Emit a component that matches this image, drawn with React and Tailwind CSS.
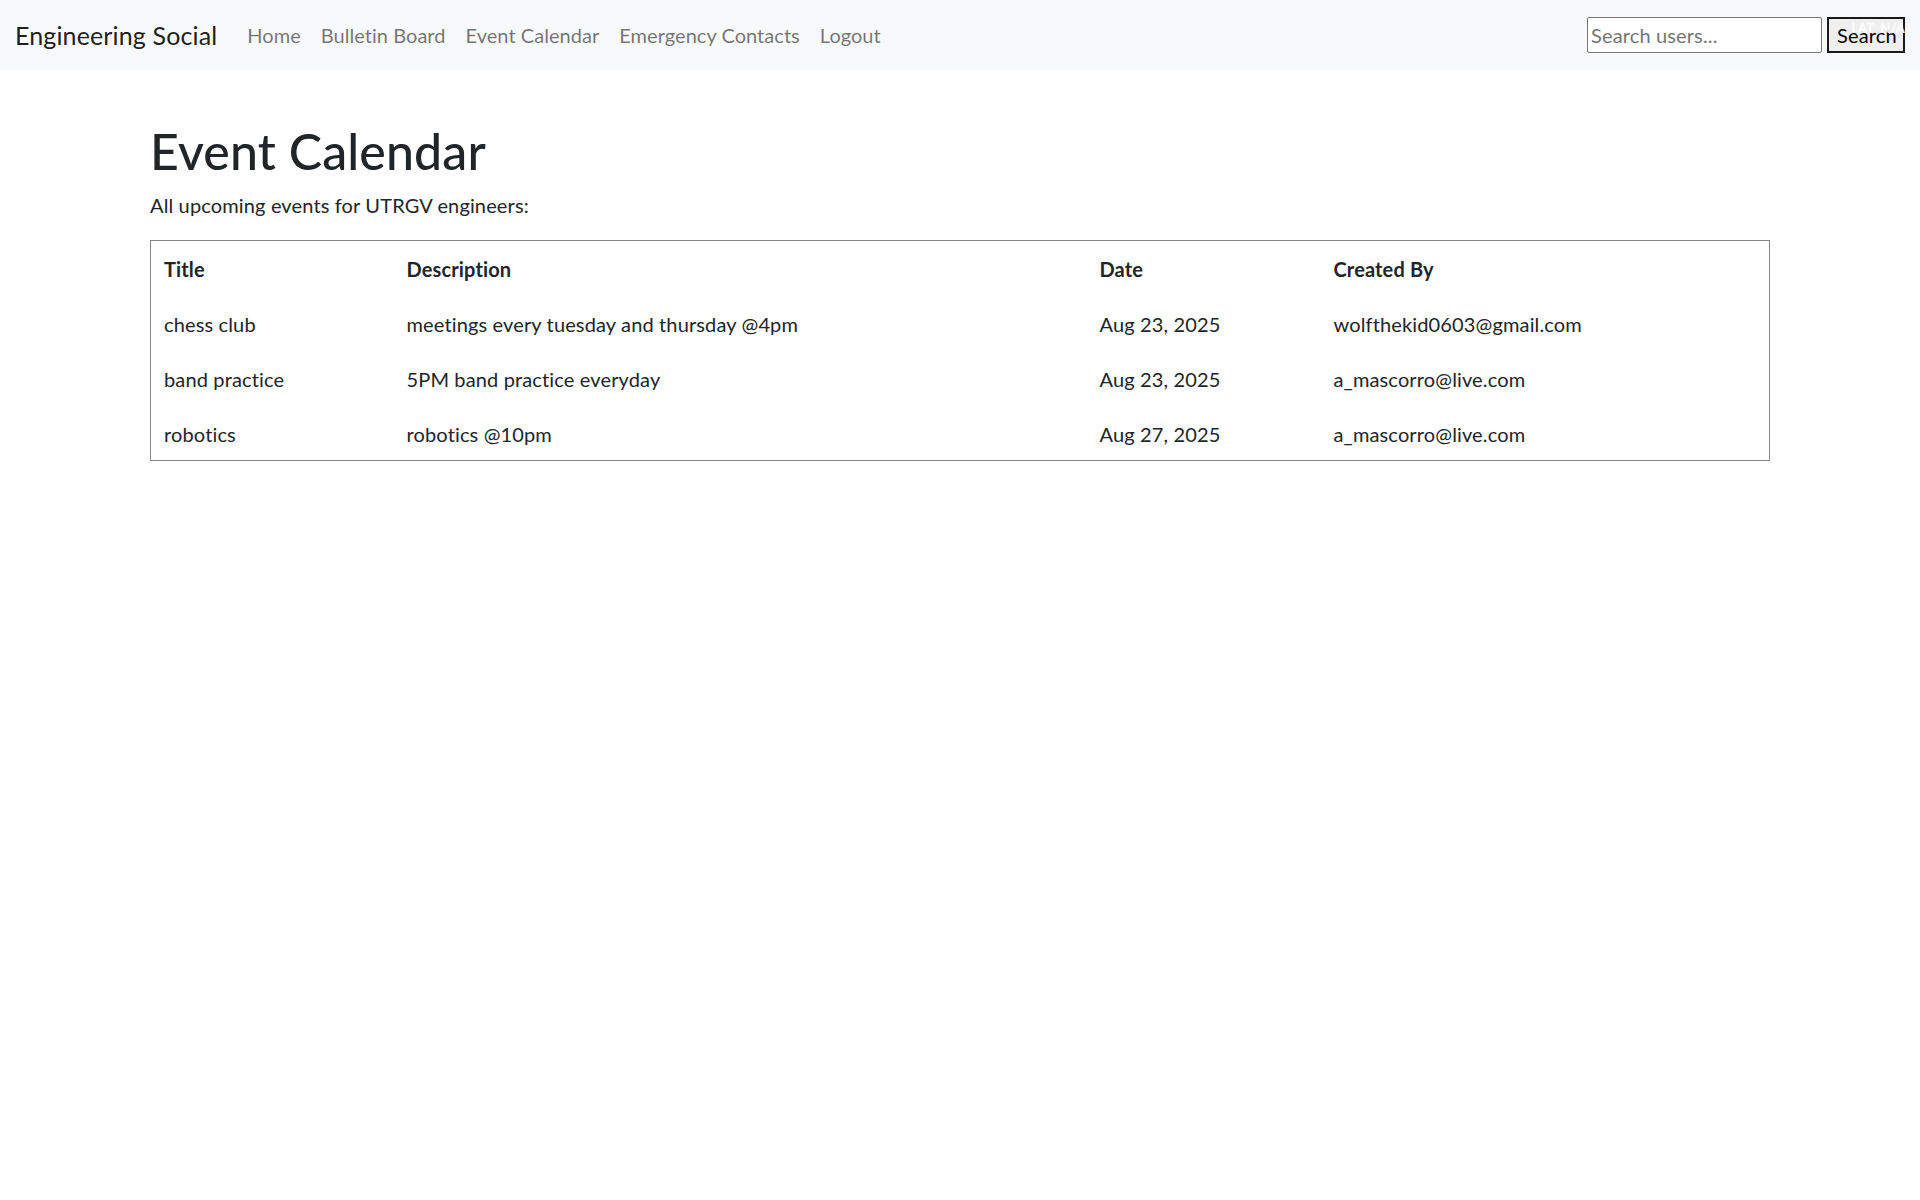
const FONT = { fontFamily: "Lato, 'Noto Sans', sans-serif" };

const events = [
    { title: "chess club", description: "meetings every tuesday and thursday @4pm", date: "Aug 23, 2025", createdBy: "wolfthekid0603@gmail.com" },
    { title: "band practice", description: "5PM band practice everyday", date: "Aug 23, 2025", createdBy: "a_mascorro@live.com" },
    { title: "robotics", description: "robotics @10pm", date: "Aug 27, 2025", createdBy: "a_mascorro@live.com" },
];

export default function App() {
    const navLink = "px-[10px] text-[20px] leading-[30px] text-black/55 tracking-[0.04px]";

    return (
        <div className="min-h-screen bg-white text-[#212529] tracking-[0.14px]" style={FONT}>
            {/* Navbar */}
            <nav className="h-[70px] bg-[#f8f9fa] flex items-center justify-between px-[15px] relative">
                <div className="flex items-center">
                    <span className="text-[25px] leading-[37px] text-black/90 mr-[20px]">Engineering Social</span>
                    <a className={navLink}>Home</a>
                    <a className={navLink}>Bulletin Board</a>
                    <a className={navLink}>Event Calendar</a>
                    <a className={navLink}>Emergency Contacts</a>
                    <a className={navLink}>Logout</a>
                </div>
                <form className="flex items-center gap-[5px]" onSubmit={(e) => e.preventDefault()}>
                    <input
                        type="text"
                        placeholder="Search users..."
                        className="w-[235px] h-[36px] border border-[#767676] rounded-[2px] bg-white px-[3px] text-[20px] text-black placeholder:text-[#757575] outline-none"
                    />
                    <button
                        type="submit"
                        className="w-[78px] h-[36px] border-2 border-[#1a1a1a] bg-[#efefef] text-[20px] text-black text-left pl-[8px] overflow-hidden whitespace-nowrap"
                    >
                        Search
                    </button>
                </form>
                {/* faint overlay seen over the search button */}
                <div className="absolute right-[15px] top-[19px] flex gap-[6px] text-[13px] font-bold text-white/90 pointer-events-none">
                    <span>LAT</span>
                    <span>N/A</span>
                </div>
            </nav>

            {/* Content */}
            <main className="w-[1620px] mx-auto pt-[51px]">
                <h1 className="text-[50px] leading-[60px] font-medium mb-[9px]">Event Calendar</h1>
                <p className="text-[20px] leading-[30px] mb-[20px]">All upcoming events for UTRGV engineers:</p>

                <table className="w-full table-fixed border border-[#888888] text-[20px] leading-[30px]">
                    <thead>
                        <tr className="h-[55px]">
                            <th className="w-[243px] text-left font-bold pl-[13px] pt-[2px]">Title</th>
                            <th className="w-[693px] text-left font-bold pl-[13px] pt-[2px]">Description</th>
                            <th className="w-[234px] text-left font-bold pl-[13px] pt-[2px]">Date</th>
                            <th className="text-left font-bold pl-[13px] pt-[2px]">Created By</th>
                        </tr>
                    </thead>
                    <tbody>
                        {events.map((ev) => (
                            <tr key={ev.title} className="h-[55px]">
                                <td className="pl-[13px] pt-[2px]">{ev.title}</td>
                                <td className="pl-[13px] pt-[2px]">{ev.description}</td>
                                <td className="pl-[13px] pt-[2px]">{ev.date}</td>
                                <td className="pl-[13px] pt-[2px]">{ev.createdBy}</td>
                            </tr>
                        ))}
                    </tbody>
                </table>
            </main>
        </div>
    );
}
